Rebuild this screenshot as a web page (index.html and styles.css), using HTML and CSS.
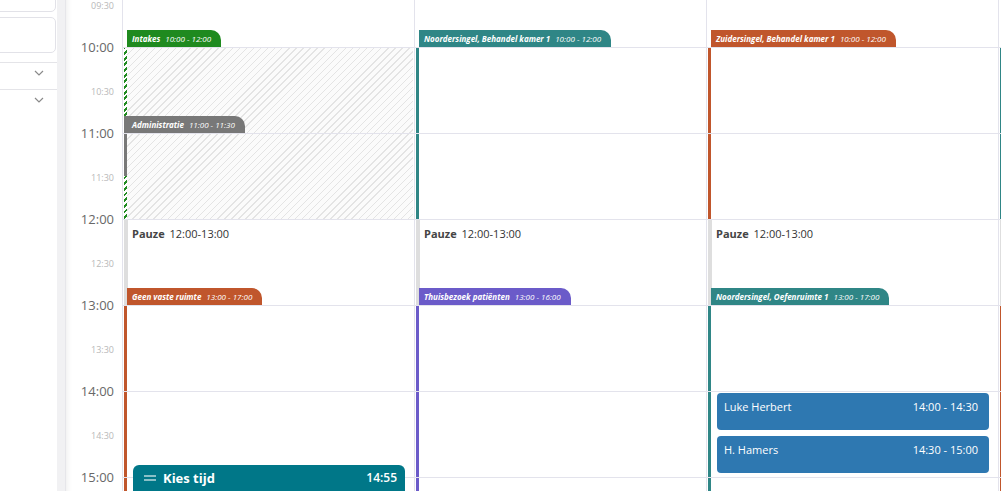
FILE: index.html
```html
<!DOCTYPE html>
<html lang="nl">
<head>
    <meta charset="UTF-8">
    <meta name="viewport" content="width=device-width, initial-scale=1.0">
    <title>Agenda</title>
    <link rel="stylesheet" href="styles.css">
</head>
<body>
    <div class="page">
        <aside class="sidebar">
            <div class="card card-top"></div>
            <div class="card card-field"></div>
            <div class="side-row">
                <svg class="chevron" width="10" height="6" viewBox="0 0 10 6"><polyline points="1,1 5,5 9,1"/></svg>
            </div>
            <div class="side-row">
                <svg class="chevron" width="10" height="6" viewBox="0 0 10 6"><polyline points="1,1 5,5 9,1"/></svg>
            </div>
        </aside>
        <div class="gutter"></div>
        <main class="calendar">
            <div class="times">
                <div class="slot hour"><span>09:00</span></div>
                <div class="slot half"><span>09:30</span></div>
                <div class="slot hour"><span>10:00</span></div>
                <div class="slot half"><span>10:30</span></div>
                <div class="slot hour"><span>11:00</span></div>
                <div class="slot half"><span>11:30</span></div>
                <div class="slot hour"><span>12:00</span></div>
                <div class="slot half"><span>12:30</span></div>
                <div class="slot hour"><span>13:00</span></div>
                <div class="slot half"><span>13:30</span></div>
                <div class="slot hour"><span>14:00</span></div>
                <div class="slot half"><span>14:30</span></div>
                <div class="slot hour"><span>15:00</span></div>
                <div class="slot half"><span>15:30</span></div>
            </div>
            <div class="columns">
                <!-- column 1 -->
                <div class="column">
                    <div class="event hatched green" style="top:86px;height:172px">
                        <div class="tab"><b>Intakes</b><i>10:00 - 12:00</i></div>
                    </div>
                    <div class="event grey" style="top:172px;height:43px">
                        <div class="tab tab-flush"><b>Administratie</b><i>11:00 - 11:30</i></div>
                    </div>
                    <div class="event pause" style="top:258px;height:86px">
                        <b>Pauze</b> 12:00-13:00
                    </div>
                    <div class="event orange" style="top:344px;height:344px">
                        <div class="tab"><b>Geen vaste ruimte</b><i>13:00 - 17:00</i></div>
                    </div>
                    <div class="pick" style="top:504px">
                        <svg class="drag" width="12" height="6" viewBox="0 0 12 6"><line x1="0" y1="1" x2="12" y2="1"/><line x1="0" y1="5" x2="12" y2="5"/></svg>
                        <span class="pick-label">Kies tijd</span>
                        <span class="pick-time">14:55</span>
                    </div>
                </div>
                <!-- column 2 -->
                <div class="column">
                    <div class="event teal" style="top:86px;height:172px">
                        <div class="tab"><b>Noordersingel, Behandel kamer 1</b><i>10:00 - 12:00</i></div>
                    </div>
                    <div class="event pause" style="top:258px;height:86px">
                        <b>Pauze</b> 12:00-13:00
                    </div>
                    <div class="event purple" style="top:344px;height:258px">
                        <div class="tab"><b>Thuisbezoek patiënten</b><i>13:00 - 16:00</i></div>
                    </div>
                </div>
                <!-- column 3 -->
                <div class="column">
                    <div class="event orange" style="top:86px;height:172px">
                        <div class="tab"><b>Zuidersingel, Behandel kamer 1</b><i>10:00 - 12:00</i></div>
                    </div>
                    <div class="event pause" style="top:258px;height:86px">
                        <b>Pauze</b> 12:00-13:00
                    </div>
                    <div class="event teal" style="top:344px;height:344px">
                        <div class="tab"><b>Noordersingel, Oefenruimte 1</b><i>13:00 - 17:00</i></div>
                    </div>
                    <div class="appt" style="top:432px">
                        <span>Luke Herbert</span><span>14:00 - 14:30</span>
                    </div>
                    <div class="appt" style="top:475px">
                        <span>H. Hamers</span><span>14:30 - 15:00</span>
                    </div>
                </div>
                <!-- column 4 -->
                <div class="column">
                    <div class="event teal" style="top:86px;height:172px"></div>
                    <div class="event pause" style="top:258px;height:86px"></div>
                    <div class="event orange" style="top:344px;height:344px"></div>
                </div>
            </div>
        </main>
    </div>
</body>
</html>
```

FILE: styles.css
```css
html, body {
    margin: 0;
    height: 100%;
    overflow: hidden;
}
body {
    font-family: "Open Sans", Arial, sans-serif;
    background: #fff;
    color: #333;
}
.page {
    display: flex;
    height: 491px;
}

/* sidebar */
.sidebar {
    width: 57px;
    flex: 0 0 57px;
    overflow: hidden;
    background: #fff;
}
.card {
    margin-left: -8px;
    margin-right: 1px;
    border: 1px solid #e2e2e8;
    border-radius: 5px;
    background: #fff;
    box-sizing: border-box;
}
.card-top {
    margin-top: -10px;
    height: 22px;
}
.card-field {
    margin-top: 5px;
    height: 36px;
}
.side-row {
    margin-top: 9px;
    height: 27px;
    border-top: 1px solid #e4e4e8;
    display: flex;
    justify-content: flex-end;
    padding: 7px 13px 0 0;
    box-sizing: border-box;
}
.side-row + .side-row {
    margin-top: 0;
}
.chevron {
    fill: none;
    stroke: #8a8a8a;
    stroke-width: 1.2;
}
.gutter {
    width: 9px;
    flex: 0 0 9px;
    background: #f1f1f3;
    border-right: 1px solid #e6e6ea;
    box-sizing: border-box;
}

/* calendar */
.calendar {
    flex: 1;
    display: flex;
    margin-top: -39px;
    height: 700px;
    overflow: hidden;
}
.times {
    width: 56px;
    flex: 0 0 56px;
    box-shadow: inset 6px 0 6px -5px rgba(0, 0, 0, 0.08);
}
.slot {
    height: 43px;
    text-align: right;
    padding-right: 8px;
    box-sizing: border-box;
}
.slot span {
    display: block;
    transform: translateY(-50%);
    line-height: 1;
}
.slot.hour span {
    font-size: 13px;
    color: #686868;
}
.slot.half span {
    font-size: 9px;
    color: #b8b8b8;
    transform: translateY(-38%);
}
.columns {
    display: flex;
}
.column {
    position: relative;
    width: 292px;
    flex: 0 0 292px;
    height: 700px;
    border-left: 1px solid #e3e3ec;
    box-sizing: border-box;
}
.column::after {
    content: "";
    position: absolute;
    inset: 0;
    background: repeating-linear-gradient(to bottom, #e3e3ec 0 1px, transparent 1px 86px);
    pointer-events: none;
    z-index: 2;
}

/* events */
.event {
    position: absolute;
    left: 1px;
    right: 1px;
    border-left: 3px solid #ccc;
    box-sizing: border-box;
    z-index: 1;
}
.tab {
    position: absolute;
    bottom: 100%;
    left: 0;
    height: 17px;
    padding: 0 10px 0 5px;
    border-radius: 0 10px 0 0;
    color: #fff;
    font-size: 8px;
    font-style: italic;
    line-height: 18px;
    white-space: nowrap;
}
.tab b {
    font-weight: 700;
    margin-right: 5px;
}
.tab i {
    font-weight: 400;
}
.tab-flush {
    left: -3px;
    padding-left: 8px;
}
.hatched {
    background: repeating-linear-gradient(135deg, #e4e4e4 0 1px, #fbfbfb 1px 5px);
}
.green {
    border-left-color: transparent;
}
.green::before {
    content: "";
    position: absolute;
    top: 0;
    bottom: 0;
    left: -3px;
    width: 3px;
    background: repeating-linear-gradient(135deg, #1f8a1f 0 2px, #fff 2px 4px);
}
.green .tab { background: #1f8a1f; }
.grey { border-left-color: #787878; }
.grey .tab { background: #787878; }
.orange { border-left-color: #c0562c; }
.orange .tab { background: #c0562c; }
.teal { border-left-color: #2f8686; }
.teal .tab { background: #2f8686; }
.purple { border-left-color: #6b5bc9; }
.purple .tab { background: #6b5bc9; }
.pause {
    border-left: 4px solid #dedede;
    background: #fff;
    padding: 7px 0 0 4px;
    font-size: 11px;
    color: #333;
}
.pause b {
    color: #454545;
    margin-right: 2px;
}

/* appointments */
.appt {
    position: absolute;
    left: 10px;
    right: 9px;
    height: 37px;
    background: #2e78b1;
    border-radius: 4px;
    color: #fff;
    font-size: 11px;
    display: flex;
    justify-content: space-between;
    padding: 6px 11px 0 7px;
    box-sizing: border-box;
    z-index: 3;
}
.pick {
    position: absolute;
    left: 10px;
    right: 9px;
    height: 32px;
    background: #007788;
    border-radius: 6px;
    color: #fff;
    display: flex;
    align-items: flex-start;
    padding: 5px 8px 0 11px;
    box-sizing: border-box;
    z-index: 3;
}
.drag {
    stroke: #b8d8dc;
    stroke-width: 1.5;
    margin: 5px 7px 0 0;
}
.pick-label {
    font-size: 13px;
    font-weight: 700;
    line-height: 16px;
}
.pick-time {
    margin-left: auto;
    font-size: 12px;
    font-weight: 600;
    line-height: 16px;
}
```
